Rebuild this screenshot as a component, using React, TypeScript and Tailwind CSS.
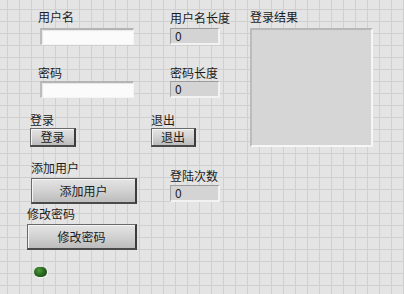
import React from "react";

const font = "font-['Noto_Sans_CJK_SC','Noto_Sans',sans-serif]";

function Label({ text, className = "" }: { text: string; className?: string }) {
  return (
    <div className={`h-[12px] text-[12px] leading-[12px] text-[#1c1c1c] whitespace-nowrap ${className}`}>{text}</div>
  );
}

function TextInput() {
  return (
    <div className="w-[94px] h-[17px] bg-[#fbfbfb] border-t-2 border-l-2 border-t-[#b4b4b4] border-l-[#bcbcbc] border-b border-r border-b-[#f4f4f4] border-r-[#f4f4f4] shadow-[inset_1px_1px_1px_rgba(0,0,0,0.08)]" />
  );
}

function NumInd({ value }: { value: string }) {
  return (
    <div className="w-[50px] h-[17px] bg-[#d4d4d4] border-t border-l border-t-[#9c9c9c] border-l-[#a4a4a4] border-b-2 border-r-2 border-b-[#f2f2f2] border-r-[#f2f2f2] flex items-center pl-[4px] text-[12px] leading-[12px] text-[#1c1c1c]">
      {value}
    </div>
  );
}

function Btn({ text, w, h }: { text: string; w: string; h: string }) {
  return (
    <div
      className={`${w} ${h} flex items-center justify-center border border-[#6a6a6a] border-r-2 border-r-[#3c3c3c] border-b-2 border-b-[#4a4a4a] bg-gradient-to-b from-[#e4e4e4] via-[#d2d2d2] to-[#bcbcbc] shadow-[inset_1px_1px_0_#f4f4f4] text-[12px] leading-[12px] text-[#1c1c1c]`}
    >
      {text}
    </div>
  );
}

export default function App() {
  return (
    <div
      className={`${font} w-[404px] h-[294px] overflow-hidden bg-[#e4e4e4] bg-[linear-gradient(to_right,#d0d0d0_1px,transparent_1px),linear-gradient(to_bottom,#d0d0d0_1px,transparent_1px)] bg-[size:12px_12px] bg-[position:7px_9px] flex`}
    >
      {/* left area */}
      <div className="w-[250px] flex flex-col">
        {/* Row A */}
        <div className="flex mt-[11px]">
          <div className="ml-[38px] flex flex-col">
            <Label text="用户名" />
            <div className="ml-[2px] mt-[5px]">
              <TextInput />
            </div>
          </div>
          <div className="ml-[36px] flex flex-col">
            <Label text="用户名长度" className="mt-[1px]" />
            <div className="mt-[4px]">
              <NumInd value="0" />
            </div>
          </div>
        </div>
        {/* Row B */}
        <div className="flex mt-[22px]">
          <div className="ml-[38px] flex flex-col">
            <Label text="密码" />
            <div className="ml-[2px] mt-[2px]">
              <TextInput />
            </div>
          </div>
          <div className="ml-[36px] flex flex-col">
            <Label text="密码长度" />
            <div className="mt-[2px]">
              <NumInd value="0" />
            </div>
          </div>
        </div>
        {/* Row C */}
        <div className="flex mt-[16px]">
          <div className="ml-[30px] w-[121px] flex flex-col">
            <Label text="登录" />
            <div className="mt-[2px]">
              <Btn text="登录" w="w-[46px]" h="h-[19px]" />
            </div>
          </div>
          <div className="flex flex-col">
            <Label text="退出" />
            <div className="mt-[2px]">
              <Btn text="退出" w="w-[45px]" h="h-[19px]" />
            </div>
          </div>
        </div>
        {/* Row D */}
        <div className="flex mt-[15px]">
          <div className="ml-[31px] w-[139px] flex flex-col">
            <Label text="添加用户" />
            <div className="mt-[4px]">
              <Btn text="添加用户" w="w-[106px]" h="h-[26px]" />
            </div>
          </div>
          <div className="flex flex-col mt-[8px]">
            <Label text="登陆次数" />
            <div className="mt-[3px]">
              <NumInd value="0" />
            </div>
          </div>
        </div>
        {/* Row E */}
        <div className="flex mt-[4px]">
          <div className="ml-[27px] flex flex-col">
            <Label text="修改密码" />
            <div className="mt-[4px]">
              <Btn text="修改密码" w="w-[110px]" h="h-[26px]" />
            </div>
          </div>
        </div>
        {/* LED */}
        <div className="ml-[34px] mt-[17px] w-[14px] h-[11px] rounded-full bg-[#f4f4f4] flex">
          <div className="w-[13px] h-[10px] rounded-full bg-[radial-gradient(circle_at_40%_35%,#4f9a3c_0%,#2a6a20_45%,#163d10_100%)]" />
        </div>
      </div>
      {/* right area */}
      <div className="flex flex-col mt-[11px]">
        <Label text="登录结果" />
        <div className="mt-[5px] w-[123px] h-[119px] bg-[#d6d6d6] border-t-2 border-l-2 border-t-[#b8b8b8] border-l-[#bcbcbc] border-b-2 border-r-2 border-b-[#f6f6f6] border-r-[#f6f6f6]" />
      </div>
    </div>
  );
}
